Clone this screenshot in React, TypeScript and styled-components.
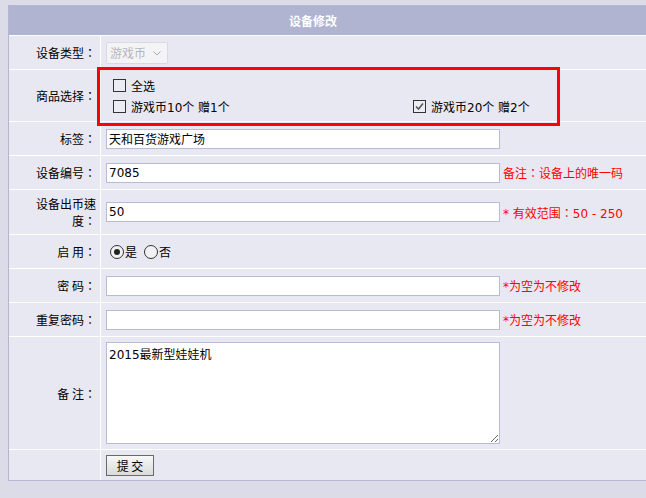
import { useState } from 'react'
import styled, { createGlobalStyle } from 'styled-components'

const GlobalStyle = createGlobalStyle`
  html {
    overflow: hidden;
    background: #dcdce9;
  }
  body {
    margin: 5px 0 0 8px;
    background: #dcdce9;
    font-family: "DejaVu Sans", "Noto Sans CJK TC", sans-serif;
    font-size: 12px;
    color: #000;
  }
`

const Form = styled.div`
  position: relative;
  width: 700px;
  display: grid;
  grid-template-columns: 91px 1fr;
  gap: 1px;
  background: #fff;
  border: 1px solid #b4b6d2;
`

const Header = styled.div`
  grid-column: 1 / -1;
  height: 29px;
  display: flex;
  align-items: center;
  padding-left: 280px;
  background: #b0b4d0;
  color: #fff;
  font-weight: bold;
  font-family: "Noto Sans CJK SC", sans-serif;
`

const Label = styled.div<{ $h: number }>`
  height: ${({ $h }) => $h}px;
  display: flex;
  align-items: center;
  justify-content: flex-end;
  text-align: right;
  line-height: 17px;
  padding: 0 4px 0 20px;
  background: #e8e8f2;
  font-family: "Noto Sans CJK TC", sans-serif;
`

const Value = styled.div<{ $pad?: number }>`
  display: flex;
  align-items: center;
  padding-left: ${({ $pad }) => $pad ?? 5}px;
  background: #e8e8f2;
`

const TextInput = styled.input`
  box-sizing: border-box;
  width: 394px;
  height: 20px;
  padding: 0 2px;
  border: 1px solid #b8bad6;
  background: #fff;
  font: 12px "DejaVu Sans", "Noto Sans CJK SC", sans-serif;
  color: #000;
  outline: none;
`

const TextArea = styled.textarea`
  box-sizing: border-box;
  width: 394px;
  height: 102px;
  padding: 2px;
  border: 1px solid #b8bad6;
  background: #fff;
  font: 12px "DejaVu Sans", "Noto Sans CJK SC", sans-serif;
  color: #000;
  outline: none;
`

const Note = styled.span`
  margin-left: 3px;
  color: #f00;
  white-space: nowrap;
`

const SelectWrap = styled.span`
  position: relative;
  display: inline-block;
`

const Select = styled.select`
  appearance: none;
  box-sizing: border-box;
  width: 62px;
  height: 22px;
  padding: 0 0 0 3px;
  border: 1px solid #d4d4d8;
  border-radius: 2px;
  background: #fafafa;
  color: #a0a0a0;
  font: 12px "Noto Sans CJK SC", sans-serif;
`

const Chevron = styled.svg`
  position: absolute;
  right: 7px;
  top: 9px;
  pointer-events: none;
`

const Options = styled.div`
  display: flex;
  flex-direction: column;
`

const OptionLine = styled.div`
  display: grid;
  grid-template-columns: 300px auto;
  height: 21px;
  align-items: center;
`

const Check = styled.label`
  display: inline-flex;
  align-items: center;
  gap: 5px;
  cursor: default;
  font-family: "DejaVu Sans", "Noto Sans CJK SC", sans-serif;
`

const Box = styled.span`
  box-sizing: border-box;
  width: 13px;
  height: 13px;
  border: 1px solid #333;
  background: #ececf4;
  display: inline-flex;
  align-items: center;
  justify-content: center;
`

const RadioGroup = styled.div`
  display: flex;
  align-items: center;
  padding-left: 4px;
`

const Radio = styled.label`
  display: inline-flex;
  align-items: center;
  gap: 1px;
  margin-right: 7px;
  font-family: "Noto Sans CJK SC", sans-serif;
`

const Circle = styled.span<{ $on: boolean }>`
  box-sizing: border-box;
  width: 14px;
  height: 14px;
  border: 1px solid #333;
  border-radius: 50%;
  background: #f2f2f6;
  display: inline-flex;
  align-items: center;
  justify-content: center;
  &::after {
    content: "";
    width: 6px;
    height: 6px;
    border-radius: 50%;
    background: ${({ $on }) => ($on ? '#222' : 'transparent')};
  }
`

const Button = styled.button`
  box-sizing: border-box;
  width: 48px;
  height: 21px;
  padding: 0;
  border: 1px solid #6a6a6a;
  background: linear-gradient(#f8f8f8, #dadada);
  font: 12px "Noto Sans CJK SC", sans-serif;
  color: #000;
`

const Highlight = styled.div`
  position: absolute;
  left: 88px;
  top: 61px;
  width: 463px;
  height: 59px;
  box-sizing: border-box;
  border: 3px solid #ff0000;
  pointer-events: none;
`

function CheckItem({ label, checked, onToggle }: { label: string; checked: boolean; onToggle: () => void }) {
  return (
    <Check onClick={onToggle}>
      <Box>
        {checked && (
          <svg width="11" height="11" viewBox="0 0 11 11">
            <path d="M2 5.5 L4.5 8 L9 2.5" fill="none" stroke="#555" strokeWidth="1.6" />
          </svg>
        )}
      </Box>
      {label}
    </Check>
  )
}

export default function App() {
  const [picked, setPicked] = useState({ a: false, b: true })
  const [enabled, setEnabled] = useState(true)

  return (
    <>
      <GlobalStyle />
      <Form>
        <Header>设备修改</Header>

        <Label $h={33}>设备类型：</Label>
        <Value>
          <SelectWrap>
            <Select disabled defaultValue="coin">
              <option value="coin">游戏币</option>
            </Select>
            <Chevron width="8" height="5" viewBox="0 0 8 5">
              <path d="M0.5 0.5 L4 4 L7.5 0.5" fill="none" stroke="#a8a8a8" strokeWidth="1" />
            </Chevron>
          </SelectWrap>
        </Value>

        <Label $h={51}>商品选择：</Label>
        <Value $pad={12}>
          <Options>
            <OptionLine>
              <CheckItem
                label="全选"
                checked={picked.a && picked.b}
                onToggle={() => {
                  const all = !(picked.a && picked.b)
                  setPicked({ a: all, b: all })
                }}
              />
            </OptionLine>
            <OptionLine>
              <CheckItem label="游戏币10个 赠1个" checked={picked.a} onToggle={() => setPicked({ ...picked, a: !picked.a })} />
              <CheckItem label="游戏币20个 赠2个" checked={picked.b} onToggle={() => setPicked({ ...picked, b: !picked.b })} />
            </OptionLine>
          </Options>
        </Value>

        <Label $h={33}>标签：</Label>
        <Value>
          <TextInput defaultValue="天和百货游戏广场" />
        </Value>

        <Label $h={33}>设备编号：</Label>
        <Value>
          <TextInput defaultValue="7085" />
          <Note>备注：设备上的唯一码</Note>
        </Value>

        <Label $h={44}>设备出币速度：</Label>
        <Value>
          <TextInput defaultValue="50" />
          <Note>* 有效范围：50 - 250</Note>
        </Value>

        <Label $h={33}>启 用：</Label>
        <Value>
          <RadioGroup>
            <Radio onClick={() => setEnabled(true)}>
              <Circle $on={enabled} />是
            </Radio>
            <Radio onClick={() => setEnabled(false)}>
              <Circle $on={!enabled} />否
            </Radio>
          </RadioGroup>
        </Value>

        <Label $h={33}>密 码：</Label>
        <Value>
          <TextInput type="password" />
          <Note>*为空为不修改</Note>
        </Value>

        <Label $h={33}>重复密码：</Label>
        <Value>
          <TextInput type="password" />
          <Note>*为空为不修改</Note>
        </Value>

        <Label $h={112}>备 注：</Label>
        <Value>
          <TextArea defaultValue="2015最新型娃娃机" />
        </Value>

        <Label $h={30} />
        <Value>
          <Button>提 交</Button>
        </Value>

        <Highlight />
      </Form>
    </>
  )
}
